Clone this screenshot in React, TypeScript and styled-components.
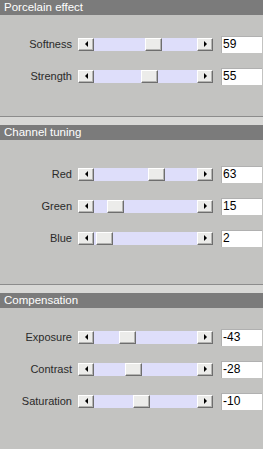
import React from "react";
import styled, { createGlobalStyle } from "styled-components";

const Global = createGlobalStyle`
  html, body { margin: 0; padding: 0; background: #c3c3c1; }
  body { font-family: "Liberation Sans", Arial, sans-serif; }
`;

const Panel = styled.div`
  width: 263px;
  min-height: 449px;
  display: flex;
  flex-direction: column;
  background: #c3c3c1;
`;

const Section = styled.section<{ $grow?: boolean }>`
  display: flex;
  flex-direction: column;
  flex: ${(p) => (p.$grow ? "1" : "none")};
`;

const Header = styled.div`
  height: 15px;
  background: #7b7b7b;
  color: #ffffff;
  font-size: 11.5px;
  line-height: 15px;
  padding-left: 4px;
  white-space: nowrap;
`;

const Body = styled.div<{ $height?: number; $padTop: number; $last?: boolean }>`
  box-sizing: border-box;
  ${(p) => (p.$height ? `height: ${p.$height}px;` : "flex: 1;")}
  padding-top: ${(p) => p.$padTop}px;
  display: flex;
  flex-direction: column;
  background: #c3c3c1;
  border-bottom: ${(p) => (p.$last ? "none" : "1px solid #8c8c8c")};
`;

const Band = styled.div`
  height: 8px;
  background: #d8d8d6;
`;

const Row = styled.div`
  height: 32px;
  display: grid;
  grid-template-columns: 78px 135px 49px;
  align-items: center;
`;

const Label = styled.span`
  font-size: 11px;
  color: #2a2a2a;
  text-align: right;
  padding-right: 6px;
  white-space: nowrap;
`;

const Scroll = styled.div`
  height: 13px;
  display: flex;
`;

const Btn = styled.div`
  box-sizing: border-box;
  width: 16px;
  height: 13px;
  background: #ececea;
  border-top: 1px solid #ffffff;
  border-left: 1px solid #ffffff;
  border-right: 1px solid #6e6e6e;
  border-bottom: 1px solid #6e6e6e;
  box-shadow: inset -1px -1px 0 #b4b4b2;
  display: flex;
  align-items: center;
  justify-content: center;
  flex: none;
`;

const Arrow = styled.span<{ $dir: "left" | "right" }>`
  width: 0;
  height: 0;
  border-top: 3px solid transparent;
  border-bottom: 3px solid transparent;
  ${(p) =>
    p.$dir === "left"
      ? "border-right: 3px solid #000;"
      : "border-left: 3px solid #000;"}
`;

const Track = styled.div`
  position: relative;
  flex: 1;
  background: #dedefa;
`;

const Thumb = styled(Btn)`
  position: absolute;
  top: 0;
  width: 17px;
`;

const ValueBox = styled.div`
  box-sizing: border-box;
  margin-left: 8px;
  height: 17px;
  background: #ffffff;
  border-top: 1px solid #b0b0b0;
  border-left: 1px solid #b0b0b0;
  font-size: 12px;
  line-height: 14px;
  padding-left: 1px;
  color: #000;
`;

type Ctl = { label: string; value: number; min: number; max: number };

const Slider: React.FC<Ctl> = ({ label, value, min, max }) => {
  const frac = (value - min) / (max - min);
  const left = Math.round(86 * frac);
  return (
    <Row>
      <Label>{label}</Label>
      <Scroll>
        <Btn>
          <Arrow $dir="left" />
        </Btn>
        <Track>
          <Thumb style={{ left }} />
        </Track>
        <Btn>
          <Arrow $dir="right" />
        </Btn>
      </Scroll>
      <ValueBox>{value}</ValueBox>
    </Row>
  );
};

export default function App() {
  return (
    <>
      <Global />
      <Panel>
        <Section>
          <Header>Porcelain effect</Header>
          <Body $height={102} $padTop={13}>
            <Slider label="Softness" value={59} min={0} max={100} />
            <Slider label="Strength" value={55} min={0} max={100} />
          </Body>
          <Band />
        </Section>
        <Section>
          <Header>Channel tuning</Header>
          <Body $height={145} $padTop={18}>
            <Slider label="Red" value={63} min={0} max={100} />
            <Slider label="Green" value={15} min={0} max={100} />
            <Slider label="Blue" value={2} min={0} max={100} />
          </Body>
          <Band />
        </Section>
        <Section $grow>
          <Header>Compensation</Header>
          <Body $padTop={13} $last>
            <Slider label="Exposure" value={-43} min={-100} max={100} />
            <Slider label="Contrast" value={-28} min={-100} max={100} />
            <Slider label="Saturation" value={-10} min={-100} max={100} />
          </Body>
        </Section>
      </Panel>
    </>
  );
}
